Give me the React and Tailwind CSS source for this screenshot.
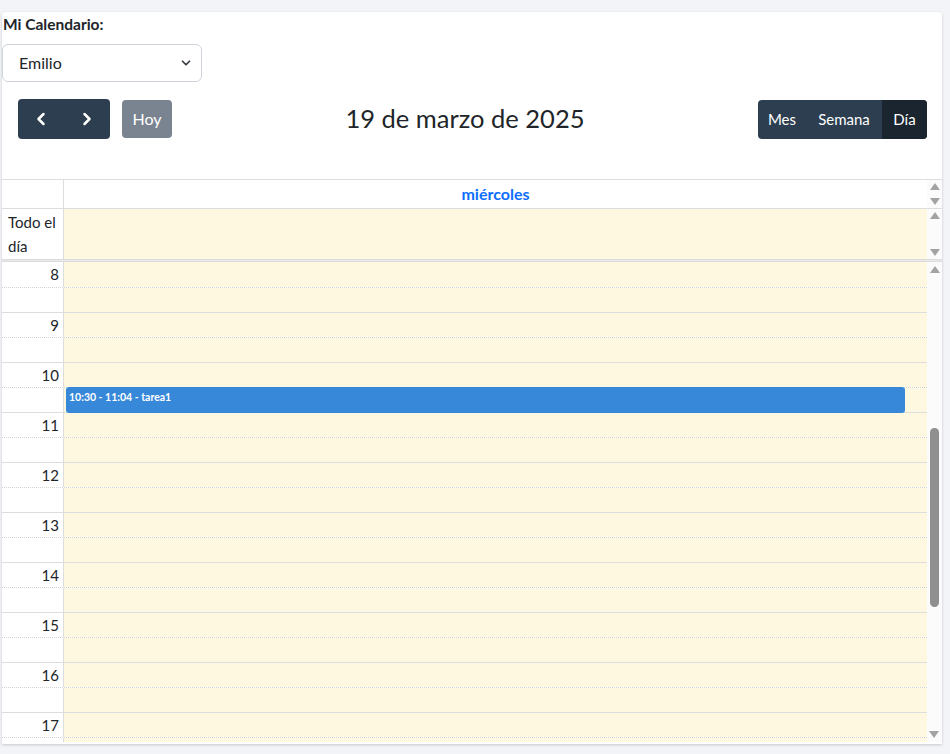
import React from 'react';
import { ChevronLeft, ChevronRight, ChevronDown } from 'lucide-react';

const hours = [8, 9, 10, 11, 12, 13, 14, 15, 16, 17];

function Arrow({ up }) {
  return (
    <svg width="10" height="7" viewBox="0 0 10 7" className="block">
      {up ? <polygon points="5,0 10,7 0,7" fill="#a3a3a3" /> : <polygon points="0,0 10,0 5,7" fill="#a3a3a3" />}
    </svg>
  );
}

function ScrollCol({ children, className = '' }) {
  return <div className={`w-[15px] shrink-0 bg-[#fbfbfb] flex flex-col items-center ${className}`}>{children}</div>;
}

export default function App() {
  return (
    <div className="min-h-screen bg-[#f3f4f7] pt-3 pl-[2px]" style={{ fontFamily: 'Lato, "Noto Sans", sans-serif' }}>
      <div className="w-[940px] h-[732px] bg-white shadow-[0_1px_3px_rgba(0,0,0,0.18)] rounded-t-sm overflow-hidden text-[#212529]">
        <div className="text-[15.5px] font-bold leading-[24px] pl-px">Mi Calendario:</div>

        <div className="mt-2 w-[200px] h-[38px] border border-[#ced4da] rounded-md flex items-center justify-between pl-4 pr-2 text-base text-[#212529]">
          <span>Emilio</span>
          <ChevronDown size={14} strokeWidth={3} className="text-[#343a40]" />
        </div>

        {/* toolbar */}
        <div className="mt-[17px] ml-4 mr-[15px] h-10 flex items-center justify-between">
          <div className="flex items-center gap-3">
            <div className="flex h-10 rounded bg-[#2c3e50] text-white">
              <button className="w-[46px] flex items-center justify-center">
                <ChevronLeft size={20} strokeWidth={3} />
              </button>
              <button className="w-[46px] flex items-center justify-center">
                <ChevronRight size={20} strokeWidth={3} />
              </button>
            </div>
            <button className="h-[38px] w-[50px] rounded bg-[#7a8490] text-white text-base">Hoy</button>
          </div>
          <h2 className="text-[25.5px] text-[#212529] leading-none">19 de marzo de 2025</h2>
          <div className="flex h-[39px] rounded overflow-hidden bg-[#2c3e50] text-white text-[15px]">
            <button className="w-12">Mes</button>
            <button className="w-[76px]">Semana</button>
            <button className="w-[45px] bg-[#1a252f]">Día</button>
          </div>
        </div>

        {/* calendar */}
        <div className="mt-10 border-t border-[#ddd]">
          {/* header */}
          <div className="flex h-[29px] border-b border-[#ddd]">
            <div className="w-[62px] shrink-0 border-r border-[#ddd]" />
            <div className="flex-1 flex items-center justify-center text-base font-bold text-[#0d6efd]">miércoles</div>
            <ScrollCol className="justify-between py-[3px]">
              <Arrow up />
              <Arrow />
            </ScrollCol>
          </div>
          {/* all day */}
          <div className="flex h-[50px]">
            <div className="w-[62px] shrink-0 border-r border-[#ddd] pl-[6px] pt-[1px] text-[15px] leading-[24px]">Todo el día</div>
            <div className="flex-1 bg-[#fef8e0]" />
            <ScrollCol className="justify-between py-[3px]">
              <Arrow up />
              <Arrow />
            </ScrollCol>
          </div>
          {/* divider */}
          <div className="h-[3px] bg-[#e9e9e9] border-y border-[#dcdcdc]" />
          {/* time grid */}
          <div className="flex h-[480px] overflow-hidden">
            <div className="flex-1 relative">
              {hours.map((h) => (
                <div key={h}>
                  <div className={`flex h-[25px] ${h === 8 ? '' : 'border-t border-[#ddd]'}`}>
                    <div className="w-[62px] shrink-0 border-r border-[#ddd] text-right pr-1 text-[15px] leading-[24px]">{h}</div>
                    <div className="flex-1 bg-[#fef8e0]" />
                  </div>
                  <div className="flex h-[25px] border-t border-dotted border-[#d4d4d4]">
                    <div className="w-[62px] shrink-0 border-r border-[#ddd]" />
                    <div className="flex-1 bg-[#fef8e0]" />
                  </div>
                </div>
              ))}
              <div className="absolute left-[64px] top-[125px] w-[839px] h-[26px] rounded-[3px] bg-[#3788d8] text-white text-[10.5px] font-bold leading-none px-[3px] pt-[5px]">
                10:30 - 11:04 - tarea1
              </div>
            </div>
            <ScrollCol className="relative pt-[4px]">
              <Arrow up />
              <div className="absolute left-[3px] top-[166px] w-[9px] h-[179px] rounded-full bg-[#8f8f8f]" />
              <div className="absolute bottom-[4px] left-[2px]">
                <Arrow />
              </div>
            </ScrollCol>
          </div>
        </div>
      </div>
    </div>
  );
}
